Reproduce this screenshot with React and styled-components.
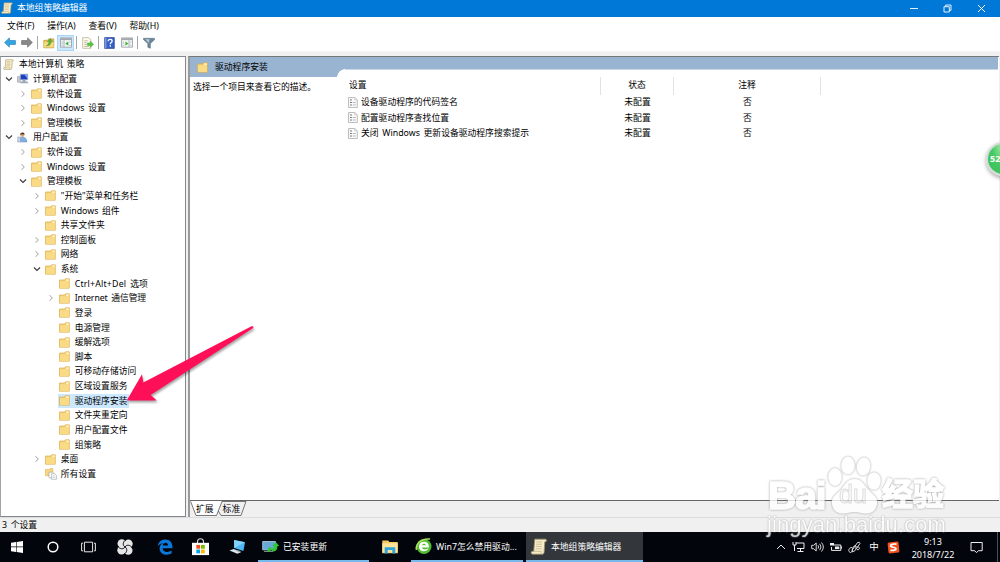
import React from 'react'
import styled, { createGlobalStyle } from 'styled-components'

const tree = [
  { name: '本地计算机 策略', depth: -1, icon: 'scroll' },
  { name: '计算机配置', depth: 0, icon: 'computer', arrow: 'open' },
  { name: '软件设置', depth: 1, arrow: 'closed' },
  { name: 'Windows 设置', depth: 1, arrow: 'closed' },
  { name: '管理模板', depth: 1, arrow: 'closed' },
  { name: '用户配置', depth: 0, icon: 'user', arrow: 'open' },
  { name: '软件设置', depth: 1, arrow: 'closed' },
  { name: 'Windows 设置', depth: 1, arrow: 'closed' },
  { name: '管理模板', depth: 1, arrow: 'open' },
  { name: '"开始"菜单和任务栏', depth: 2, arrow: 'closed' },
  { name: 'Windows 组件', depth: 2, arrow: 'closed' },
  { name: '共享文件夹', depth: 2 },
  { name: '控制面板', depth: 2, arrow: 'closed' },
  { name: '网络', depth: 2, arrow: 'closed' },
  { name: '系统', depth: 2, arrow: 'open' },
  { name: 'Ctrl+Alt+Del 选项', depth: 3, spacing: 0.18 },
  { name: 'Internet 通信管理', depth: 3, arrow: 'closed', spacing: -0.1 },
  { name: '登录', depth: 3 },
  { name: '电源管理', depth: 3 },
  { name: '缓解选项', depth: 3 },
  { name: '脚本', depth: 3 },
  { name: '可移动存储访问', depth: 3 },
  { name: '区域设置服务', depth: 3 },
  { name: '驱动程序安装', depth: 3, selected: true },
  { name: '文件夹重定向', depth: 3 },
  { name: '用户配置文件', depth: 3 },
  { name: '组策略', depth: 3 },
  { name: '桌面', depth: 2, arrow: 'closed' },
  { name: '所有设置', depth: 2, icon: 'all' }
]

const settings = ['设备驱动程序的代码签名', '配置驱动程序查找位置', '关闭 Windows 更新设备驱动程序搜索提示']

const FolderIcon = () => (
  <svg width="11" height="11" viewBox="0 0 11 11">
    <path d="M.5 2h5.2l.8-1.2h3.8v9.4H.5z" fill="#f3cf74" stroke="#dcae4c" strokeWidth=".7" />
    <path d="M1 3.2h5.8L7.4 2h2.5v8H1z" fill="#f9da85" />
    <path d="M7.3 1.3h2.3v1.6H7.3z" fill="#fff5d2" />
  </svg>
)

const ScrollIcon = ({ size = 11 }) => (
  <svg width={size} height={size} viewBox="0 0 12 12">
    <path d="M3 .8h7.4c1.2 0 1.3 1.7.2 1.8l-.5.1-.5 7.4c0 .8-.5 1.3-1.2 1.3H1.5c-1.3 0-1.5-1.8-.2-2h1L3 .8z" fill="#f6ecc8" stroke="#9d8f65" strokeWidth=".6" />
    <path d="M2.2 9.4h5.4c-.3.8.1 1.8.9 1.9M4 2.8h4.2M3.9 4.4H8M3.8 6h4.1M3.7 7.6h4.1" fill="none" stroke="#c4b78d" strokeWidth=".6" />
  </svg>
)

const ComputerIcon = () => (
  <svg width="12" height="11" viewBox="0 0 12 11">
    <path d="M.5 3.5h2.7v5.8H.5z" fill="#c6cbd2" stroke="#8b929c" strokeWidth=".5" />
    <path d="M3.3 1.2h7.4v5.6H3.3z" fill="#1b3fc0" stroke="#a9b5c8" strokeWidth=".8" />
    <path d="M7.2 1.6h3.1v3.6z" fill="#7aa9f5" />
    <path d="M5.6 7h2.8v1.4H5.6zM3.8 8.5h6.6l1 1.7H3z" fill="#9aa5b5" />
  </svg>
)

const UserIcon = () => (
  <svg width="11" height="11" viewBox="0 0 11 11">
    <circle cx="5.4" cy="2.8" r="2.1" fill="#dda271" />
    <path d="M3.2 2.9C3 .3 7.4-.5 7.6 2.6 6.4 2.5 5 1.6 3.2 2.9z" fill="#51382b" />
    <path d="M2.5 9.8c0-3 .7-4.6 3-4.6 2.7 0 4.3 1.6 4.3 4.8z" fill="#83afe0" stroke="#477bb9" strokeWidth=".5" />
    <path d="M.7 5h2.8v5H.7z" fill="#c9d7e8" stroke="#7890ae" strokeWidth=".5" />
  </svg>
)

const AllIcon = () => (
  <svg width="12" height="12" viewBox="0 0 12 12">
    <path d="M.4 1.5h3.8l.8-.9h2.8v7.1H.4z" fill="#f6d57e" stroke="#dfb456" strokeWidth=".6" />
    <path d="M4 4.2h3.6L8.8 5.4v4.5H4z" fill="#fff" stroke="#8d8d8d" strokeWidth=".5" />
    <path d="M6.4 5.8h3.4l1.6 1.5v4H6.4z" fill="#fff" stroke="#8d8d8d" strokeWidth=".5" />
    <path d="M7.4 8h2.8M7.4 9.5h2.8" stroke="#9ab0c8" strokeWidth=".5" />
  </svg>
)

const SettingIcon = () => (
  <svg width="10" height="11" viewBox="0 0 10 11">
    <path d="M.5.5h6.2l2.6 2.3v7.7H.5z" fill="#fafafa" stroke="#a3a3a3" strokeWidth=".7" />
    <path d="M6.5.5v2.4h2.7" fill="none" stroke="#b5b5b5" strokeWidth=".5" />
    <path d="M2.2 3h1.5M2.2 5.5h1.5M2.2 8h1.5" stroke="#4c4c5c" strokeWidth="1.2" />
    <path d="M4.8 5.5h3M4.8 8h3" stroke="#9b9ba8" strokeWidth=".7" />
  </svg>
)

const Chevron = ({ type }) => (
  <svg width="8" height="8" viewBox="0 0 8 8" fill="none">
    {type === 'open' && <path d="M1 2.5 4 5.4 7 2.5" stroke="#3d3d3d" strokeWidth="1.2" />}
    {type === 'closed' && <path d="M2.6 1.2 5.3 4 2.6 6.8" stroke="#a0a0a0" strokeWidth="1" />}
  </svg>
)

const ArrowIcon = ({ color, edge, flip }) => (
  <svg width="12" height="11" viewBox="0 0 12 11">
    <path
      d="M.6 5.5 5.4.9v2.7h6v3.8h-6v2.7z"
      fill={color} stroke={edge} strokeWidth=".7"
      transform={flip ? 'translate(12 0) scale(-1 1)' : undefined}
    />
  </svg>
)

const UpFolderIcon = () => (
  <svg width="12" height="12" viewBox="0 0 12 12">
    <path d="M.8 3.3h3.8l1-1.4h5.2v8.9H.8z" fill="#eec65a" stroke="#bd9532" strokeWidth=".7" />
    <path d="M1.2 5.3h9.3v5H1.2z" fill="#f8dc84" />
    <path d="M3.2 8.8C5.2 8 6 6.6 5.8 4.6H4.4L7.3 1.4l2.5 3.2H8.1c.2 2.6-1.6 4.6-4.9 4.2z" fill="#5bb53c" stroke="#3c8a26" strokeWidth=".4" />
  </svg>
)

const WindowIcon = ({ arrow = 'left' }) => (
  <svg width="12" height="11" viewBox="0 0 12 11">
    <path d="M.5.9h11v9.3H.5z" fill="#f5f6f7" stroke="#8a8f94" strokeWidth=".7" />
    <path d="M.8 1.2h10.4v1.9H.8z" fill="#a3a8ad" />
    <path d={arrow === 'left' ? 'M4 3.2v6.7' : 'M8 3.2v6.7'} stroke="#8995a1" strokeWidth=".7" />
    <path d="M1.5 5h1.6M1.5 6.7h1.6M1.5 8.4h1.6M9 5h1.5M9 8.4h1.5" stroke="#8ea1b2" strokeWidth=".6" />
    <path d={arrow === 'left' ? 'M8.3 4.5v4.3L5.3 6.6z' : 'M4.4 4.5v4.3l3-2.2z'} fill="#3cb333" />
  </svg>
)

const ExportIcon = () => (
  <svg width="12" height="12" viewBox="0 0 12 12">
    <path d="M.7.7h6l2.2 2.1v8.5H.7z" fill="#fffdf0" stroke="#b1a782" strokeWidth=".7" />
    <path d="M2.2 3.8h3.6M2.2 5.7h3M2.2 7.6h3M2.2 9.5h4.9" stroke="#a7a184" strokeWidth=".7" />
    <path d="M5.5 6h2.8V4.3l3.3 3-3.3 3V8.5H5.5z" fill="#55c63d" stroke="#33992a" strokeWidth=".4" />
  </svg>
)

const HelpIcon = () => (
  <svg width="11" height="12" viewBox="0 0 11 12">
    <path d="M.7.6h9.6v10.8H.7z" fill="#3762c8" stroke="#223f92" strokeWidth=".7" />
    <path d="M1 .9h1.5v10.2H1z" fill="#7598e2" />
    <path d="M4.2 4.2c0-2.4 3.9-2.3 3.9 0 0 1.5-1.8 1.3-1.8 3M6.3 8.3v1.4" fill="none" stroke="#fff" strokeWidth="1.3" />
  </svg>
)

const FilterIcon = () => (
  <svg width="12" height="12" viewBox="0 0 12 12">
    <path d="M.5 1.3h11v1.4L7.4 6.6v4.7l-2.6-1V6.6L.5 2.7z" fill="#6c8799" stroke="#506a7b" strokeWidth=".5" />
    <path d="M2.4 2.3h4L5.8 6z" fill="#b9cdd9" />
  </svg>
)

const SwirlIcon = () => (
  <svg width="16" height="16" viewBox="0 0 16 16">
    <g fill="#e6e6e6">
      <circle cx="4.8" cy="4.6" r="4.3" />
      <circle cx="11.4" cy="4.8" r="4.3" />
      <circle cx="11.2" cy="11.4" r="4.3" />
      <circle cx="4.6" cy="11.2" r="4.3" />
    </g>
    <g fill="none" stroke="#02050b" strokeWidth="1">
      {
        [0, 90, 180, 270].map((angle) => (
          <path key={angle} d="M8 8C5.4 6.6 5.6 2.6 9.2.6" transform={`rotate(${angle} 8 8)`} />
        ))
      }
    </g>
  </svg>
)

const PointerArrow = () => (
  <svg width="136" height="86" viewBox="122 320 136 86">
    <path d="M126.7 400.5 142 374.3 143.3 382.5 251.5 326.2Q254 325.8 253.2 328L150.7 395 156.8 400.6z" fill="#ff0f57" />
  </svg>
)

const PawMark = () => (
  <svg width="64" height="60" viewBox="0 0 64 60">
    <g fill="#fff">
      <ellipse cx="14" cy="21" rx="6.8" ry="9" />
      <ellipse cx="27" cy="9.5" rx="6.8" ry="9" />
      <ellipse cx="42.5" cy="10.5" rx="6.8" ry="9" transform="rotate(8 42.5 10.5)" />
      <ellipse cx="53" cy="25" rx="6.8" ry="8.8" />
      <path d="M33.5 23c8 0 9.500 6.500 15 12 4 4 8.500 6.500 7.500 13-1 7-5.500 9.500-11 9.500-5 0-7-1.500-11.500-1.500S27 57.500 22 57.500c-5.500 0-10-2.500-11-9.500-1-6.500 3.500-9 7.500-13 5.500-5.500 7-12 15-12z" />
    </g>
  </svg>
)

function TreeItem({ item }) {
  const icons = { scroll: <ScrollIcon />, computer: <ComputerIcon />, user: <UserIcon />, all: <AllIcon /> }
  return (
    <TreeRow $depth={item.depth}>
      {item.depth >= 0 && <Chevron type={item.arrow} />}
      <TreeLabel $selected={item.selected} $root={item.depth < 0} $spacing={item.spacing}>
        <TreeGlyph>{icons[item.icon] || <FolderIcon />}</TreeGlyph>
        {item.name}
      </TreeLabel>
    </TreeRow>
  )
}

function TitleBar() {
  return (
    <Title>
      <ScrollIcon size={12} />
      <TitleText>本地组策略编辑器</TitleText>
      <WindowButtons>
        <svg width="8" height="9" viewBox="0 0 8 9"><path d="M0 4.5h8" stroke="#fff" strokeWidth=".9" /></svg>
        <svg width="9" height="9" viewBox="0 0 9 9" fill="none" stroke="#fff" strokeWidth=".9"><path d="M1 2.7h5.3V8H1zM2.7 2.7V1H8v5.3H6.3" /></svg>
        <svg width="9" height="9" viewBox="0 0 9 9" stroke="#fff" strokeWidth="1"><path d="m1 1 7 7M8 1 1 8" /></svg>
      </WindowButtons>
    </Title>
  )
}

function Tools() {
  return (
    <ToolBar>
      <Tool><ArrowIcon color="#36a5e5" edge="#2183c0" /></Tool>
      <Tool><ArrowIcon color="#8a8a8a" edge="#6f6f6f" flip /></Tool>
      <Separator />
      <Tool><UpFolderIcon /></Tool>
      <Tool $active><WindowIcon /></Tool>
      <Separator />
      <Tool><ExportIcon /></Tool>
      <Separator />
      <Tool><HelpIcon /></Tool>
      <Tool><WindowIcon arrow="right" /></Tool>
      <Separator />
      <Tool><FilterIcon /></Tool>
    </ToolBar>
  )
}

function Details() {
  return (
    <DetailPane>
      <DetailBody>
        <Description>
          <DescriptionTitle>
            <FolderIcon />
            <span>驱动程序安装</span>
          </DescriptionTitle>
          <p>选择一个项目来查看它的描述。</p>
        </Description>
        <Listing>
          <HeadRow>
            <HeadCell $first>设置</HeadCell>
            <HeadCell>状态</HeadCell>
            <HeadCell>注释</HeadCell>
          </HeadRow>
          {
            settings.map((name) => (
              <ListRow key={name}>
                <NameCell><SettingIcon />{name}</NameCell>
                <Cell>未配置</Cell>
                <Cell>否</Cell>
              </ListRow>
            ))
          }
        </Listing>
      </DetailBody>
      <Tabs>
        <svg width="57" height="16" viewBox="0 0 57 16">
          <path d="M29 .5h27L51 14.5H31L27 8z" fill="#f0f0f0" stroke="#555" strokeWidth=".8" />
          <path d="M0 0h32L26.5 14.5H6z" fill="#fff" />
          <path d="M.6.4 6 14.5h20.5L32 .5" fill="none" stroke="#555" strokeWidth=".8" />
        </svg>
        <TabNames><span>扩展</span><span>标准</span></TabNames>
      </Tabs>
    </DetailPane>
  )
}

function Taskbar() {
  return (
    <Bar>
      <BarIcon $w={34}>
        <svg width="12" height="12" viewBox="0 0 12 12" fill="#fff"><path d="M0 1.7 5 1v4.6H0zM5.6.9 12 0v5.6H5.6zM0 6.2h5v4.7l-5-.7zM5.6 6.2H12V12l-6.4-1z" /></svg>
      </BarIcon>
      <BarIcon $w={37}>
        <svg width="12" height="12" viewBox="0 0 12 12"><circle cx="6" cy="6" r="4.8" fill="none" stroke="#fff" strokeWidth="1.5" /></svg>
      </BarIcon>
      <BarIcon $w={34}>
        <svg width="15" height="12" viewBox="0 0 15 12" fill="none" stroke="#e8e8e8" strokeWidth="1"><path d="M3.4 1.2h8.2v9.6H3.4zM2 2.2H.6v7.6H2M13 2.2h1.4v7.6H13" /></svg>
      </BarIcon>
      <BarIcon $w={40}><SwirlIcon /></BarIcon>
      <BarIcon $w={40}>
        <svg width="16" height="16" viewBox="0 0 16 16"><path d="M.7 7.4C1.4 2.7 4.2.5 8.2.5c4.7 0 7.2 3.1 7.2 7.3v1.4H5.6c.2 4.1 5.6 4.7 9 2.4v3c-5.1 2.5-12 .6-12-5.2 0-2.5 1.4-4.3 3.4-5.1C3.8 4.5 2 5.4.7 7.4zM5.7 6.6h5.4C11.1 2.9 6.2 2.8 5.7 6.6z" fill="#0a78d8" /></svg>
      </BarIcon>
      <BarIcon $w={31}>
        <svg width="17" height="18" viewBox="0 0 17 18">
          <path d="M5.5 5.3V3.7c0-4 6-4 6 0v1.6" fill="none" stroke="#ddd" strokeWidth="1.1" />
          <path d="M0 4.8h17v12.3H0z" fill="#fff" />
          <path d="M4.3 6.9h3.8v3.8H4.3z" fill="#f25022" /><path d="M9 6.9h3.8v3.8H9z" fill="#7fba00" />
          <path d="M4.3 11.5h3.8v3.8H4.3z" fill="#00a4ef" /><path d="M9 11.5h3.8v3.8H9z" fill="#ffb900" />
        </svg>
      </BarIcon>
      <BarIcon $w={42}>
        <svg width="17" height="16" viewBox="0 0 17 16">
          <path d="m5 1 11 2.3-1.6 8.6L5.2 9z" fill="#4fb7f1" /><path d="m5 1 11 2.3L5.2 9z" fill="#83d2fb" />
          <path d="m.5 11.4 4.2-1.3 7.7 2.8-4 1.9z" fill="#d8e6ed" /><path d="m8 11.1 3.1.9.2 1.3-4.3-1.4z" fill="#8ca4b2" />
        </svg>
      </BarIcon>
      <Task $w={111}>
        <svg width="18" height="13" viewBox="0 0 18 13">
          <path d="M.7 1.5h12.8v8.3H.7z" fill="#66a9d8" stroke="#b8d5e7" strokeWidth=".8" /><path d="M2 11.4h9" stroke="#899" />
          <path d="M5.5 11.7C5.3 8 7.4 6.2 9.4 8c1.3 1.2 2.5.6 2.5-2h-1.7L13.8 2l3.5 4h-1.8c0 5.2-3.7 6.5-5.7 4.5-1.3-1-1.8-.3-1.9 1.2z" fill="#32c635" />
        </svg>
        <span>已安装更新</span>
      </Task>
      <BarIcon $w={42}>
        <svg width="16" height="14" viewBox="0 0 16 14"><path d="M.3.5h6l1 1.6h8.4v11.2H.3z" fill="#f4c864" /><path d="M.3 3.2h15.4v9.4H.3z" fill="#ffe398" /><path d="M2.7 7.2h10.6v6.2h-3V10H5.7v3.4h-3z" fill="#2fa4dd" /></svg>
      </BarIcon>
      <Task $w={112}>
        <svg width="17" height="17" viewBox="0 0 17 17">
          <circle cx="8.5" cy="8.5" r="7.5" fill="#52bd32" />
          <path d="M1 12C-.5 6.5 6-.2 14.6 1.1" fill="none" stroke="#aadd62" strokeWidth="1.5" />
          <path d="M3.5 8.8c0-3.1 2-5 5.1-5 3.3 0 5 2.3 4.8 5.7H6.6c.3 2.3 3.6 2.4 6.3 1.1-1.5 4.2-9.4 3.6-9.4-1.8zm3.1-1.5h3.8c-.1-2.1-3.5-2.1-3.8 0z" fill="#fff" />
        </svg>
        <span>Win7怎么禁用驱动...</span>
      </Task>
      <Task $w={117} $active>
        <ScrollIcon size={17} />
        <span>本地组策略编辑器</span>
      </Task>
      <Tray>
        <svg width="10" height="8" viewBox="0 0 10 8" fill="none" stroke="#eee"><path d="m1 6 4-4 4 4" /></svg>
        <svg width="13" height="12" viewBox="0 0 13 12" fill="none" stroke="#eee"><path d="M4 2h8v5.500H5M8.500 8v2.500M5.500 10.500h6M1 1v3h3V1M2.500 4v6" /></svg>
        <svg width="13" height="12" viewBox="0 0 13 12" fill="none" stroke="#eee" strokeWidth=".9"><path d="M.7 4.3h2L5.2 2v8L2.7 7.7h-2zM7 4.3q1.3 1.7 0 3.4M8.7 2.8q2.6 3.2 0 6.4M10.5 1.5q3.7 4.5 0 9" /></svg>
        <svg width="12" height="10" viewBox="0 0 12 10"><path d="M3.5 3h7.3v5.4H1.5V5" fill="none" stroke="#eee" /><path d="M5 4.5h4.3V7H5z" fill="#eee" /><path d="M0 1h4v2.500H0zM11 4.500h1v2h-1z" fill="#eee" /></svg>
        <svg width="13" height="13" viewBox="0 0 13 13" fill="none" stroke="#eee" strokeWidth=".9"><path d="M4.5 8.7 9.6 1.5q2.2-.9 2.4 1L6.8 9.8l-2.5 1.1zM4 6.5C-.2 6.5.2 11.4 2.5 11.5c2.4.2 1-6.2 4.5-6.7 1.8 0 1.5 2 .1 2.8M9 6.1c3.4-.8 3.4 2.8-.1 2.6" /></svg>
        <Ime>中</Ime>
        <svg width="13" height="13" viewBox="0 0 13 13"><rect x="1" y="1" width="11" height="11" rx="1.500" fill="#f4511e" transform="rotate(-6 6.5 6.5)" /><path d="M9.5 3.2C5.7 2.6 3.1 3.5 3.7 5.2c.5 1.2 5.2 1 5.4 2.5.1 1.3-2.9 1.9-5.7 1.4" fill="none" stroke="#fff" strokeWidth="1.7" /></svg>
        <Clock><span>9:13</span><span>2018/7/22</span></Clock>
        <svg width="13" height="13" viewBox="0 0 13 13" fill="none" stroke="#eee"><path d="M1 1.500h11.2v8.2H8.3L6.5 11.7 4.7 9.7H1z" /></svg>
      </Tray>
    </Bar>
  )
}

function App() {
  return (
    <Screen>
      <GlobalStyle />
      <TitleBar />
      <Menu>
        <span>文件(F)</span>
        <span>操作(A)</span>
        <span>查看(V)</span>
        <span>帮助(H)</span>
      </Menu>
      <Tools />
      <Content>
        <TreePane>
          {
            tree.map((item, index) => <TreeItem key={index} item={item} />)
          }
        </TreePane>
        <Details />
      </Content>
      <Status>
        <span>3 个设置</span>
        <StatusCell $w={98} />
        <StatusCell $w={63} />
      </Status>
      <Taskbar />
      <Pointer><PointerArrow /></Pointer>
      <Badge>52</Badge>
      <Watermark>
        <Brand>
          <BrandLatin>Bai</BrandLatin>
          <Paw><PawMark /><span>du</span></Paw>
          <BrandHan>经验</BrandHan>
        </Brand>
        <Site>jingyan.baidu.com</Site>
      </Watermark>
    </Screen>
  )
}

export default App

const GlobalStyle = createGlobalStyle`
  * {
    box-sizing: border-box;
  }
  body {
    margin: 0;
    overflow: hidden;
  }
  svg {
    display: block;
    flex: none;
  }
  p {
    margin: 0;
  }
`

const Screen = styled.div`
  position: relative;
  display: flex;
  flex-direction: column;
  width: 1000px;
  height: 562px;
  overflow: hidden;
  background: #f0f0f0;
  color: #000;
  font-family: "Noto Sans", "Noto Sans CJK SC", sans-serif;
  font-size: 8.8px;
  line-height: 14px;
  white-space: nowrap;
  word-spacing: 1.4px;
`

const Title = styled.header`
  display: flex;
  align-items: center;
  flex: none;
  height: 17px;
  padding: 0 14px 1px 1px;
  background: #0078d7;
  color: #fff;
`

const TitleText = styled.span`
  margin-left: 4px;
`

const WindowButtons = styled.div`
  display: flex;
  gap: 25px;
  margin-left: auto;
`

const Menu = styled.nav`
  display: flex;
  align-items: center;
  gap: 12.8px;
  flex: none;
  height: 17px;
  padding-left: 7px;
  background: #fff;
`

const ToolBar = styled.div`
  display: flex;
  align-items: center;
  flex: none;
  height: 18px;
  padding-left: 1px;
  background: #fff;
  border-bottom: 1px solid #f5f5f5;
`

const Tool = styled.div`
  display: flex;
  align-items: center;
  justify-content: center;
  width: 17px;
  height: 16px;
  background: ${(p) => (p.$active ? '#cce8ff' : 'transparent')};
  box-shadow: ${(p) => (p.$active ? 'inset 0 0 0 1px #a9d6f7' : 'none')};
`

const Separator = styled.div`
  width: 1px;
  height: 13px;
  margin: 0 2px;
  background: #a5a5a5;
`

const Content = styled.main`
  display: flex;
  gap: 2px;
  flex: none;
  height: 465px;
  padding-top: 4px;
`

const TreePane = styled.aside`
  width: 186px;
  border: 1px solid #828790;
  border-left-color: #a0a4ab;
  background: #fff;
`

const TreeRow = styled.div`
  display: flex;
  align-items: center;
  height: 14.63px;
  padding-left: ${(p) => (p.$depth < 0 ? 1 : 4 + p.$depth * 13.9)}px;
`

const TreeLabel = styled.div`
  display: flex;
  align-items: center;
  height: 14px;
  padding: 0 2px;
  margin-left: ${(p) => (p.$root ? 0 : 3)}px;
  background: ${(p) => (p.$selected ? '#cce8ff' : 'transparent')};
  letter-spacing: ${(p) => p.$spacing || 0}px;
`

const TreeGlyph = styled.span`
  width: 15px;

  svg {
    margin-left: -0.8px;
  }
`

const DetailPane = styled.section`
  display: flex;
  flex-direction: column;
  width: 811px;
  border-left: 2px solid #9a9a9a;
  border-top: 1px solid #777;
`

const DetailBody = styled.div`
  display: flex;
  height: 445px;
  padding-right: 1px;
  background: #fff;
  border-bottom: 1px solid #666;
`

const Description = styled.div`
  width: 147px;
  background: #fff;

  p {
    padding: 3px 0 0 3px;
  }
`

const DescriptionTitle = styled.div`
  display: flex;
  align-items: center;
  gap: 7px;
  height: 20px;
  padding-left: 7px;
  background: #99b4d1;
`

const Listing = styled.div`
  flex: 1;
  padding-top: 12px;
  background:
    radial-gradient(circle at 8px 20px, #fff 7.5px, #99b4d1 8px) 0 0 / 8px 20px no-repeat,
    linear-gradient(#99b4d1 12px, #c9d8e8 12px, #c9d8e8 13px, #fff 13px);
`

const HeadRow = styled.div`
  display: grid;
  grid-template-columns: 264px 73px 147px;
  height: 25.6px;
  padding-top: 8px;
`

const HeadCell = styled.div`
  height: 18px;
  padding-left: ${(p) => (p.$first ? 12 : 0)}px;
  border-right: 1px solid #e2e2e2;
  text-align: ${(p) => (p.$first ? 'left' : 'center')};
  line-height: 17px;
`

const ListRow = styled.div`
  display: grid;
  grid-template-columns: 264px 73px 147px;
  height: 15.4px;
  align-items: center;
`

const NameCell = styled.div`
  display: flex;
  align-items: center;
  gap: 3px;
  padding-left: 11px;
`

const Cell = styled.div`
  text-align: center;
`

const Tabs = styled.div`
  display: grid;
  height: 16px;

  > * {
    grid-area: 1 / 1;
  }
`

const TabNames = styled.div`
  display: flex;
  gap: 9px;
  padding: 1px 0 0 6px;
`

const Status = styled.footer`
  display: flex;
  flex: none;
  height: 15px;
  padding-left: 2px;
  border-top: 1px solid #dcdcdc;
  line-height: 14px;

  span {
    margin-right: auto;
  }
`

const StatusCell = styled.div`
  width: ${(p) => p.$w}px;
  height: 13px;
  border-left: 1px solid #dedede;
`

const Bar = styled.div`
  display: flex;
  flex: none;
  height: 30px;
  background: #02050b;
  color: #fff;
`

const BarIcon = styled.div`
  display: flex;
  align-items: center;
  justify-content: center;
  flex: none;
  width: ${(p) => p.$w}px;
`

const Task = styled.div`
  display: flex;
  align-items: center;
  flex: none;
  width: ${(p) => p.$w}px;
  padding: 1px 4px 0;
  margin-left: ${(p) => (p.$active ? 3 : 0)}px;
  border-bottom: 2px solid #76b9ed;
  background: ${(p) => (p.$active ? '#33373c' : 'transparent')};

  svg {
    width: 18px;
  }

  span {
    margin-left: 3px;
  }
`

const Tray = styled.div`
  display: flex;
  align-items: center;
  gap: 6px;
  margin: 0 2px 0 auto;
  padding-right: 14px;
  border-right: 1px solid #4d5157;
`

const Ime = styled.span`
  width: 14px;
  font-size: 9.5px;
  text-align: center;
`

const Clock = styled.div`
  display: flex;
  flex-direction: column;
  align-items: center;
  width: 50px;
  margin: 0 6px 0 2px;
  padding-top: 2px;
  font-size: 9px;
  line-height: 13.5px;
`

const Pointer = styled.div`
  position: absolute;
  left: 122px;
  top: 320px;
  filter: drop-shadow(1px 2px 1px rgba(0, 0, 0, 0.35));
`

const Badge = styled.div`
  position: absolute;
  left: 986px;
  top: 142px;
  width: 34px;
  height: 34px;
  padding-left: 2px;
  border: 2px solid #d5dcd7;
  border-radius: 50%;
  background: radial-gradient(ellipse at 45% 10%, #9be7a2 0, #45c964 40%, #35bd55 100%);
  box-shadow: 0 2px 4px rgba(0, 0, 0, 0.35);
  color: #fff;
  font-size: 9px;
  font-weight: 700;
  line-height: 30px;
`

const Watermark = styled.div`
  position: absolute;
  left: 767px;
  top: 454px;
  width: 185px;
  color: #fff;
  opacity: 0.8;
  font-family: "Liberation Sans", "Noto Sans CJK SC", sans-serif;
`

const Brand = styled.div`
  display: flex;
  align-items: flex-end;
  height: 60px;
  -webkit-text-stroke: 1.5px #fff;
  filter: drop-shadow(0 0 0.8px #8a8a8a);
`

const BrandLatin = styled.span`
  width: 61px;
  padding-left: 1px;
  font-size: 39px;
  font-weight: 700;
  line-height: 36px;
  letter-spacing: -1px;
`

const Paw = styled.div`
  display: grid;
  width: 54px;
  height: 58px;

  > * {
    grid-area: 1 / 1;
  }

  svg {
    margin-left: -7px;
  }

  span {
    padding: 24px 0 0 11px;
    font-size: 25px;
    line-height: 28px;
    -webkit-text-stroke: 1px #d6d6d6;
  }
`

const BrandHan = styled.span`
  font-size: 31px;
  font-weight: 700;
  line-height: 38px;
`

const Site = styled.div`
  font-size: 22px;
  line-height: 22px;
  letter-spacing: 0.1px;
  text-shadow: 0 0 2px #999, 0 0 1px #bbb;
`
